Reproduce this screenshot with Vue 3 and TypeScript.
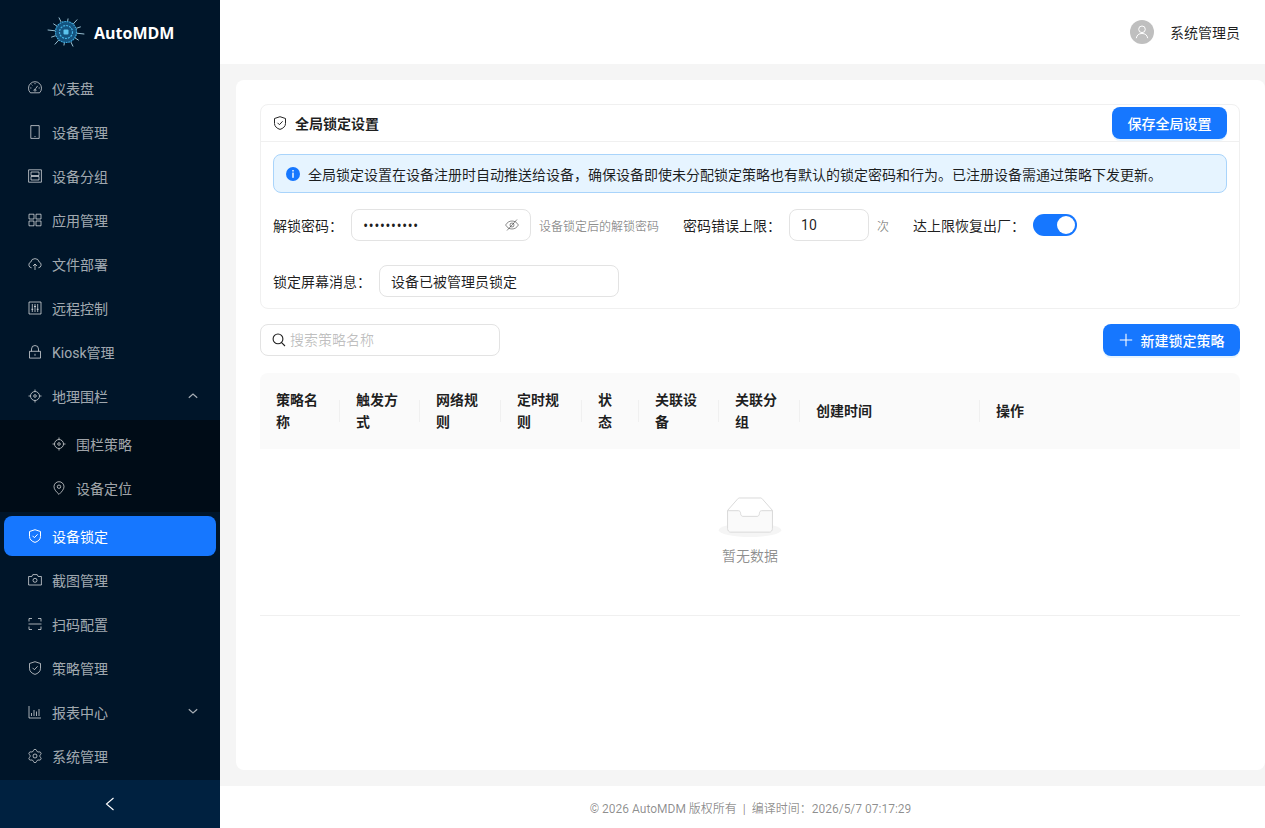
<template>
  <div class="layout">
    <!-- 侧边栏 -->
    <aside class="sider">
      <div class="logo">
        <svg class="logo-mark" width="38" height="32" viewBox="0 0 38 32">
          <line v-for="r in logoRays" :key="r.id" x1="19" y1="15" :x2="r.x" :y2="r.y" stroke="#a9d3e4" stroke-width="0.9" />
          <circle cx="19" cy="15" r="11" fill="#14537f" />
          <circle cx="19" cy="15" r="10.500" fill="none" stroke="#3fa7d8" stroke-width="1.200" stroke-dasharray="1.500 1" />
          <circle cx="19" cy="15" r="6.500" fill="none" stroke="#45b4e6" stroke-width="1.200" stroke-dasharray="2 1" />
          <rect x="16.500" y="12.500" width="5" height="5" rx="1" fill="#5cc3ee" />
        </svg>
        <span class="logo-text">AutoMDM</span>
      </div>

      <nav class="menu">
        <template v-for="item in menu" :key="item.label">
          <div class="menu-item" :class="{ active: item.active }">
            <svg class="icon" width="14" height="14" viewBox="0 0 14 14"><path :d="icons[item.icon]" /></svg>
            <span class="menu-label">{{ item.label }}</span>
            <svg v-if="item.arrow" class="arrow" width="10" height="10" viewBox="0 0 10 10">
              <path :d="item.arrow === 'up' ? 'M.8 6.800 5 3l4.200 3.800' : 'M.8 2.200 5 6l4.200-3.800'" />
            </svg>
          </div>
          <div v-if="item.children" class="submenu">
            <div v-for="sub in item.children" :key="sub.label" class="menu-item sub">
              <svg class="icon" width="14" height="14" viewBox="0 0 14 14"><path :d="icons[sub.icon]" /></svg>
              <span class="menu-label">{{ sub.label }}</span>
            </div>
          </div>
        </template>
      </nav>

      <div class="trigger">
        <svg width="12" height="14" viewBox="0 0 12 14"><path d="M9.500 1 2.500 7l7 6" /></svg>
      </div>
    </aside>

    <div class="right">
      <!-- 顶栏 -->
      <header class="topbar">
        <span class="avatar">
          <svg width="14" height="14" viewBox="0 0 14 14"><path d="M7 1a3.300 3.300 0 1 0 0 6.600A3.300 3.300 0 0 0 7 1zM1.300 13.200a5.800 5.800 0 0 1 11.400 0" /></svg>
        </span>
        <span class="username">系统管理员</span>
      </header>

      <main class="main">
        <section class="page-card">
          <!-- 全局锁定设置 -->
          <div class="global-card">
            <div class="global-head">
              <div class="global-title">
                <svg class="title-icon" width="14" height="14" viewBox="0 0 14 14"><path :d="icons.safety" /></svg>
                <span>全局锁定设置</span>
              </div>
              <button type="button" class="btn-primary">保存全局设置</button>
            </div>
            <div class="global-body">
              <div class="alert">
                <svg width="14" height="14" viewBox="0 0 14 14">
                  <circle cx="7" cy="7" r="7" fill="#1677ff" />
                  <rect x="6.300" y="3" width="1.400" height="1.500" fill="#fff" />
                  <rect x="6.300" y="5.600" width="1.400" height="5.200" fill="#fff" />
                </svg>
                <span>全局锁定设置在设备注册时自动推送给设备，确保设备即使未分配锁定策略也有默认的锁定密码和行为。已注册设备需通过策略下发更新。</span>
              </div>

              <div class="form-row">
                <label>解锁密码：</label>
                <div class="field pwd">
                  <input type="password" value="1234567890" />
                  <svg class="eye" width="14" height="14" viewBox="0 0 14 14">
                    <path d="M.6 7C2.200 4.400 4.300 3 7 3s4.800 1.400 6.400 4C11.800 9.600 9.700 11 7 11S2.200 9.600.6 7zM5 7a2 2 0 1 0 4 0 2 2 0 0 0-4 0zM2 12.500 12 1.500" />
                  </svg>
                </div>
                <span class="hint">设备锁定后的解锁密码</span>
                <label class="next">密码错误上限：</label>
                <div class="field num"><input type="text" value="10" /></div>
                <span class="hint">次</span>
                <label class="next">达上限恢复出厂：</label>
                <div class="switch"><span class="handle"></span></div>
              </div>

              <div class="form-row second">
                <label>锁定屏幕消息：</label>
                <div class="field msg"><input type="text" value="设备已被管理员锁定" /></div>
              </div>
            </div>
          </div>

          <!-- 搜索 + 新建 -->
          <div class="toolbar">
            <div class="search">
              <svg width="14" height="14" viewBox="0 0 14 14"><path d="M6 1a4.900 4.900 0 1 0 0 9.800A4.900 4.900 0 0 0 6 1zM9.600 9.600 13 13" /></svg>
              <input type="text" placeholder="搜索策略名称" />
            </div>
            <button type="button" class="btn-primary new-btn">
              <svg width="14" height="14" viewBox="0 0 14 14"><path d="M7 .8v12.400M.8 7h12.400" /></svg>
              <span>新建锁定策略</span>
            </button>
          </div>

          <!-- 策略表格 -->
          <table class="table">
            <colgroup>
              <col v-for="c in columns" :key="c.title" :style="{ width: c.width }" />
            </colgroup>
            <thead>
              <tr>
                <th v-for="c in columns" :key="c.title">{{ c.title }}</th>
              </tr>
            </thead>
            <tbody>
              <tr>
                <td :colspan="columns.length">
                  <div class="empty">
                    <svg width="64" height="41" viewBox="0 0 64 41">
                      <g transform="translate(0 1)" fill="none" fill-rule="evenodd">
                        <ellipse fill="#f5f5f5" cx="32" cy="33" rx="32" ry="7" />
                        <g fill-rule="nonzero" stroke="#d9d9d9">
                          <path d="M55 12.760L44.854 1.258C44.367.474 43.656 0 42.907 0H21.093c-.749 0-1.460.474-1.947 1.257L9 12.761V22h46v-9.240z" />
                          <path d="M41.613 15.931c0-1.605.994-2.930 2.227-2.931H55v18.137C55 33.260 53.680 35 52.050 35h-40.100C10.320 35 9 33.259 9 31.137V13h11.160c1.233 0 2.227 1.323 2.227 2.928v.022c0 1.605 1.005 2.901 2.237 2.901h14.752c1.232 0 2.237-1.308 2.237-2.913v-.007z" fill="#fafafa" />
                        </g>
                      </g>
                    </svg>
                    <p>暂无数据</p>
                  </div>
                </td>
              </tr>
            </tbody>
          </table>
        </section>
      </main>

      <footer class="footer">© 2026 AutoMDM 版权所有 &nbsp;|&nbsp; 编译时间：2026/5/7 07:17:29</footer>
    </div>
  </div>
</template>

<script setup lang="ts">
interface SubItem {
  label: string
  icon: string
}

interface MenuItem extends SubItem {
  active?: boolean
  arrow?: 'up' | 'down'
  children?: SubItem[]
}

// 齿轮图标的路径，按角度算出来
const gearPath = (): string => {
  const pts: string[] = []
  for (let i = 0; i < 48; i++) {
    const t = (i / 48) * Math.PI * 2
    const wave = Math.cos(t * 6)
    const r = 5.8 + Math.max(-0.8, Math.min(0.8, wave * 1.6))
    pts.push(`${(7 + r * Math.sin(t)).toFixed(2)} ${(7 - r * Math.cos(t)).toFixed(2)}`)
  }
  return `M${pts.join('L')}ZM5 7a2 2 0 1 0 4 0 2 2 0 0 0-4 0z`
}

const icons: Record<string, string> = {
  dashboard: 'M2.400 11.800A6.500 6.500 0 1 1 11.600 11.800ZM6.200 8.600a1 1 0 1 0 1.600 0 1 1 0 0 0-1.600 0M7.500 7.800 9.700 4.800M7 2v1.200M2.200 7h1.200M3.600 3.600l.8.8M10.600 7h1.200',
  mobile: 'M2.800.6h8.400v12.800H2.800zM6.500 11.500h1',
  group: 'M.6.800h12.800v12.400H.6zM3 3h8v3.500H3zM3 7.500h8V11H3z',
  appstore: 'M1 1.200h5v4.800H1zM8 1.200h5v4.800H8zM1 8h5v4.800H1zM8 8h5v4.800H8z',
  cloud: 'M3.600 10.800A3 3 0 0 1 2.800 5 4.300 4.300 0 0 1 11.200 5 3 3 0 0 1 10.400 10.800M7 13V7.200M5 9l2-2 2 2',
  control: 'M1 1h12v12H1zM4.300 3v8M7 3v8M9.700 3v8M3.300 8.300h2M6 5.500h2M8.700 8.300h2',
  lock: 'M1.500 6.300h11v6.800h-11zM3.500 6.300V4a3.500 3.500 0 0 1 7 0v2.300M7 8.800v2',
  aim: 'M2.500 7a4.500 4.500 0 1 0 9 0 4.500 4.500 0 0 0-9 0zM7 .5v2M7 11.500v2M.5 7h2M11.500 7h2M5.700 7a1.300 1.300 0 1 0 2.600 0 1.300 1.300 0 0 0-2.600 0z',
  pin: 'M7 13.400C4.500 11 2 8.400 2 5.700a5 5 0 0 1 10 0c0 2.700-2.500 5.300-5 7.700zM5.300 5.700a1.700 1.700 0 1 0 3.400 0 1.700 1.700 0 0 0-3.400 0z',
  safety: 'M7 .7 12.500 2.500v5c0 3-2.500 5-5.500 5.900C4 12.500 1.500 10.500 1.500 7.500v-5zM4.500 6.800 6.400 8.700 9.600 5.300',
  camera: 'M.6 3.500h3.200l1-1.900h4.400l1 1.900h3.200v8.500H.6zM5 7.300a2 2 0 1 0 4 0 2 2 0 0 0-4 0z',
  scan: 'M1 4.500V1.500h3M10 1.500h3v3M1 9.500v3h3M10 12.500h3v-3M.5 7h13',
  chart: 'M1 1v12h12M3.500 11V8M6 11V5M8.500 11V6.500M11 11V4',
  setting: gearPath()
}

const menu: MenuItem[] = [
  { label: '仪表盘', icon: 'dashboard' },
  { label: '设备管理', icon: 'mobile' },
  { label: '设备分组', icon: 'group' },
  { label: '应用管理', icon: 'appstore' },
  { label: '文件部署', icon: 'cloud' },
  { label: '远程控制', icon: 'control' },
  { label: 'Kiosk管理', icon: 'lock' },
  {
    label: '地理围栏',
    icon: 'aim',
    arrow: 'up',
    children: [
      { label: '围栏策略', icon: 'aim' },
      { label: '设备定位', icon: 'pin' }
    ]
  },
  { label: '设备锁定', icon: 'safety', active: true },
  { label: '截图管理', icon: 'camera' },
  { label: '扫码配置', icon: 'scan' },
  { label: '策略管理', icon: 'safety' },
  { label: '报表中心', icon: 'chart', arrow: 'down' },
  { label: '系统管理', icon: 'setting' }
]

const columns = [
  { title: '策略名称', width: '80px' },
  { title: '触发方式', width: '80px' },
  { title: '网络规则', width: '81px' },
  { title: '定时规则', width: '81px' },
  { title: '状态', width: '57px' },
  { title: '关联设备', width: '80px' },
  { title: '关联分组', width: '81px' },
  { title: '创建时间', width: '180px' },
  { title: '操作', width: 'auto' }
]

// logo 的放射线
const logoRays = Array.from({ length: 12 }, (_, i) => {
  const a = (i / 12) * Math.PI * 2 + 0.13
  const r = i % 2 === 0 ? 18.5 : 16
  return { id: i, x: 19 + r * Math.cos(a), y: 15 + r * 0.85 * Math.sin(a) }
})
</script>

<style>
html,
body {
  margin: 0;
  padding: 0;
  overflow: hidden;
}
</style>

<style scoped>
.layout {
  display: flex;
  height: 100vh;
  font-family: Roboto, "Noto Sans CJK SC", sans-serif;
  font-size: 14px;
  color: rgba(0, 0, 0, 0.88);
}

/* 侧边栏 */
.sider {
  width: 220px;
  flex: none;
  display: flex;
  flex-direction: column;
  background: #001529;
}

.logo {
  height: 64px;
  flex: none;
  display: flex;
  align-items: center;
  padding: 0 0 0 47px;
  gap: 9px;
  box-sizing: border-box;
}

.logo-mark {
  flex: none;
  margin-top: 2px;
}

.logo-text {
  color: #fff;
  font-family: "Open Sans", sans-serif;
  font-size: 16px;
  font-weight: 700;
  margin-top: 2px;
}

.menu {
  flex: 1;
  display: flex;
  flex-direction: column;
  gap: 4px;
  padding-top: 4px;
}

.menu-item {
  height: 40px;
  flex: none;
  margin: 0 4px;
  padding: 0 18px 0 24px;
  display: flex;
  align-items: center;
  gap: 10px;
  border-radius: 8px;
  color: rgba(255, 255, 255, 0.65);
}

.menu-item .icon {
  flex: none;
  fill: none;
  stroke: currentColor;
  stroke-width: 1;
}

.menu-item.active {
  background: #1677ff;
  color: #fff;
}

.menu-item.sub {
  padding-left: 48px;
}

.menu-label {
  flex: 1;
}

.arrow {
  fill: none;
  stroke: currentColor;
  stroke-width: 1.2;
}

.submenu {
  background: #000c17;
  padding: 4px 0;
  display: flex;
  flex-direction: column;
  gap: 4px;
}

.trigger {
  height: 48px;
  flex: none;
  background: #002140;
  display: flex;
  align-items: center;
  justify-content: center;
}

.trigger svg {
  fill: none;
  stroke: #fff;
  stroke-width: 1.1;
}

/* 右侧 */
.right {
  flex: 1;
  min-width: 0;
  display: flex;
  flex-direction: column;
}

.topbar {
  height: 64px;
  flex: none;
  background: #fff;
  display: flex;
  align-items: center;
  justify-content: flex-end;
  gap: 16px;
  padding-right: 25px;
}

.avatar {
  width: 24px;
  height: 24px;
  border-radius: 50%;
  background: #bfbfbf;
  display: flex;
  align-items: center;
  justify-content: center;
}

.avatar svg {
  fill: none;
  stroke: #fff;
  stroke-width: 1;
}

.main {
  flex: 1;
  background: #f5f5f5;
  padding: 16px 0 16px 16px;
  min-height: 0;
  display: flex;
}

.page-card {
  flex: 1;
  min-width: 0;
  background: #fff;
  border-radius: 8px;
  padding: 24px 25px 24px 24px;
}

.global-card {
  border: 1px solid #f0f0f0;
  border-radius: 8px;
  margin-bottom: 15px;
}

.global-head {
  display: flex;
  align-items: center;
  justify-content: space-between;
  padding: 2px 12px;
  border-bottom: 1px solid #f0f0f0;
}

.global-title {
  display: flex;
  align-items: center;
  gap: 8px;
  font-weight: 600;
}

.title-icon {
  fill: none;
  stroke: #262626;
  stroke-width: 1;
}

.btn-primary {
  height: 32px;
  padding: 0 15.5px;
  background: #1677ff;
  color: #fff;
  border: none;
  border-radius: 8px;
  font: inherit;
  font-weight: 500;
  cursor: pointer;
  box-shadow: 0 2px 0 rgba(5, 145, 255, 0.1);
}

.global-body {
  padding: 12px 12px 11px;
}

.alert {
  display: flex;
  align-items: center;
  gap: 8px;
  height: 39px;
  box-sizing: border-box;
  padding: 0 12px;
  background: #e6f4ff;
  border: 1px solid #a9d4fb;
  border-radius: 8px;
  margin-bottom: 16px;
}

.form-row {
  display: flex;
  align-items: center;
  gap: 8px;
  height: 32px;
}

.form-row.second {
  margin-top: 24px;
}

.form-row label {
  flex: none;
}

.form-row .next {
  margin-left: 16px;
}

.field {
  height: 32px;
  box-sizing: border-box;
  border: 1px solid #e3e3e3;
  border-radius: 8px;
  display: flex;
  align-items: center;
  padding: 0 11px;
  flex: none;
}

.field input,
.search input {
  border: none;
  outline: none;
  background: none;
  padding: 0;
  min-width: 0;
  flex: 1;
  font: inherit;
  color: inherit;
}

.pwd {
  width: 180px;
}

.pwd input {
  font-family: "Open Sans", sans-serif;
  letter-spacing: 0.3px;
}

.eye {
  flex: none;
  fill: none;
  stroke: rgba(0, 0, 0, 0.45);
  stroke-width: 1;
}

.num {
  width: 80px;
}

.msg {
  width: 240px;
}

.hint {
  font-size: 12px;
  color: rgba(0, 0, 0, 0.45);
  flex: none;
}

.switch {
  width: 44px;
  height: 22px;
  border-radius: 11px;
  background: #1677ff;
  position: relative;
}

.handle {
  position: absolute;
  top: 2px;
  right: 2px;
  width: 18px;
  height: 18px;
  border-radius: 50%;
  background: #fff;
}

.toolbar {
  display: flex;
  align-items: center;
  justify-content: space-between;
  margin-bottom: 17px;
}

.search {
  width: 240px;
  height: 32px;
  box-sizing: border-box;
  border: 1px solid #e3e3e3;
  border-radius: 8px;
  display: flex;
  align-items: center;
  gap: 4px;
  padding: 0 11px;
}

.search svg {
  flex: none;
  fill: none;
  stroke: rgba(0, 0, 0, 0.88);
  stroke-width: 1.1;
}

.search input::placeholder {
  color: rgba(0, 0, 0, 0.25);
}

.new-btn {
  display: flex;
  align-items: center;
  gap: 8px;
}

.new-btn svg {
  fill: none;
  stroke: #fff;
  stroke-width: 1.1;
}

.table {
  width: 100%;
  table-layout: fixed;
  border-collapse: separate;
  border-spacing: 0;
}

.table th {
  position: relative;
  padding: 16px;
  background: #fafafa;
  text-align: left;
  font-weight: 600;
  line-height: 22px;
}

.table th:first-child {
  border-top-left-radius: 8px;
}

.table th:last-child {
  border-top-right-radius: 8px;
}

.table th:not(:last-child)::before {
  content: "";
  position: absolute;
  top: 50%;
  right: 0;
  width: 1px;
  height: 22px;
  transform: translateY(-50%);
  background: #f0f0f0;
}

.table td {
  padding: 16px;
  border-bottom: 1px solid #f0f0f0;
}

.empty {
  margin: 32px 0;
  text-align: center;
  color: rgba(0, 0, 0, 0.45);
  line-height: 22px;
}

.empty svg {
  display: block;
  margin: 0 auto 8px;
  height: 40px;
}

.empty p {
  margin: 0;
}

.footer {
  height: 42px;
  flex: none;
  background: #fff;
  display: flex;
  align-items: center;
  justify-content: center;
  padding-left: 16px;
  font-size: 12px;
  color: rgba(0, 0, 0, 0.45);
}
</style>
